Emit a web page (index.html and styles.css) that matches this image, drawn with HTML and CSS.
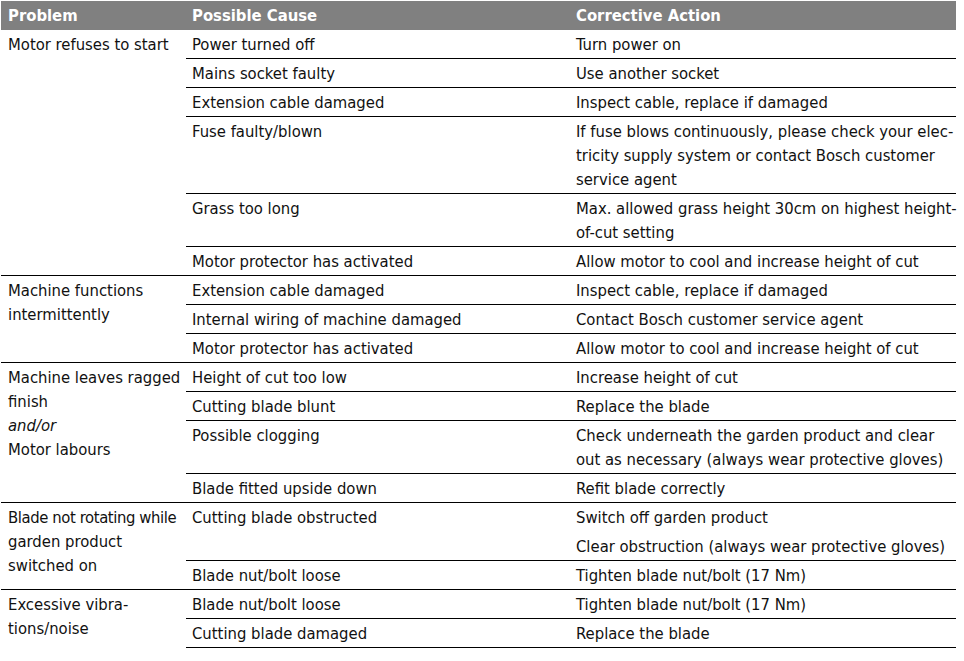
FILE: index.html
```html
<!DOCTYPE html>
<html lang="en">
<head>
<meta charset="utf-8">
<title>Troubleshooting</title>
<link rel="stylesheet" href="styles.css">
</head>
<body>
<table class="trouble">
  <colgroup>
    <col class="c1"><col class="c2"><col class="c3">
  </colgroup>
  <thead>
    <tr><th class="p">Problem</th><th>Possible Cause</th><th>Corrective Action</th></tr>
  </thead>
  <tbody>
    <tr class="first"><td class="p" rowspan="6">Motor refuses to start</td><td>Power turned off</td><td>Turn power on</td></tr>
    <tr><td>Mains socket faulty</td><td>Use another socket</td></tr>
    <tr><td>Extension cable damaged</td><td>Inspect cable, replace if damaged</td></tr>
    <tr><td>Fuse faulty/blown</td><td>If fuse blows continuously, please check your elec-<br>tricity supply system or contact Bosch customer<br>service agent</td></tr>
    <tr><td>Grass too long</td><td>Max. allowed grass height 30cm on highest height-<br>of-cut setting</td></tr>
    <tr><td>Motor protector has activated</td><td>Allow motor to cool and increase height of cut</td></tr>

    <tr><td class="p" rowspan="3">Machine functions<br>intermittently</td><td>Extension cable damaged</td><td>Inspect cable, replace if damaged</td></tr>
    <tr><td>Internal wiring of machine damaged</td><td>Contact Bosch customer service agent</td></tr>
    <tr><td>Motor protector has activated</td><td>Allow motor to cool and increase height of cut</td></tr>

    <tr><td class="p" rowspan="4">Machine leaves ragged<br>finish<br><em>and/or</em><br>Motor labours</td><td>Height of cut too low</td><td>Increase height of cut</td></tr>
    <tr><td>Cutting blade blunt</td><td>Replace the blade</td></tr>
    <tr><td>Possible clogging</td><td>Check underneath the garden product and clear<br>out as necessary (always wear protective gloves)</td></tr>
    <tr><td>Blade fitted upside down</td><td>Refit blade correctly</td></tr>

    <tr><td class="p" rowspan="3"><span class="tight">Blade not rotating while</span><br>garden product<br>switched on</td><td rowspan="2">Cutting blade obstructed</td><td>Switch off garden product</td></tr>
    <tr><td class="nob">Clear obstruction (always wear protective gloves)</td></tr>
    <tr><td>Blade nut/bolt loose</td><td>Tighten blade nut/bolt (17 Nm)</td></tr>

    <tr><td class="p" rowspan="2">Excessive vibra-<br>tions/noise</td><td>Blade nut/bolt loose</td><td>Tighten blade nut/bolt (17 Nm)</td></tr>
    <tr class="last"><td>Cutting blade damaged</td><td>Replace the blade</td></tr>
  </tbody>
</table>
</body>
</html>
```

FILE: styles.css
```css
html, body {
  margin: 0;
  padding: 0;
  background: #ffffff;
}
body {
  font-family: "DejaVu Sans Condensed", "DejaVu Sans", sans-serif;
  font-stretch: condensed;
  font-size: 16.5px;
  color: #111111;
}
.trouble {
  border-collapse: collapse;
  width: 955px;
  margin: 1px 0 0 1px;
  table-layout: fixed;
}
.c1 { width: 185px; }
.c2 { width: 384px; }
.c3 { width: 386px; }
.trouble th {
  background: #808080;
  color: #ffffff;
  font-weight: bold;
  text-align: left;
  height: 29px;
  padding: 0 6px;
  line-height: 29px;
}
.trouble td {
  border-top: 1px solid #000;
  padding: 3px 6px 1px 6px;
  line-height: 24px;
  vertical-align: top;
  white-space: nowrap;
}
.trouble .p {
  padding-left: 7px;
  padding-right: 2px;
}
.trouble tr.first td {
  border-top: none;
}
.trouble td.nob {
  border-top: none;
  padding-top: 4px;
}
.trouble tr.last td {
  border-bottom: 1px solid #000;
}
.trouble em {
  font-style: italic;
}
.tight {
  letter-spacing: -0.4px;
}
```
